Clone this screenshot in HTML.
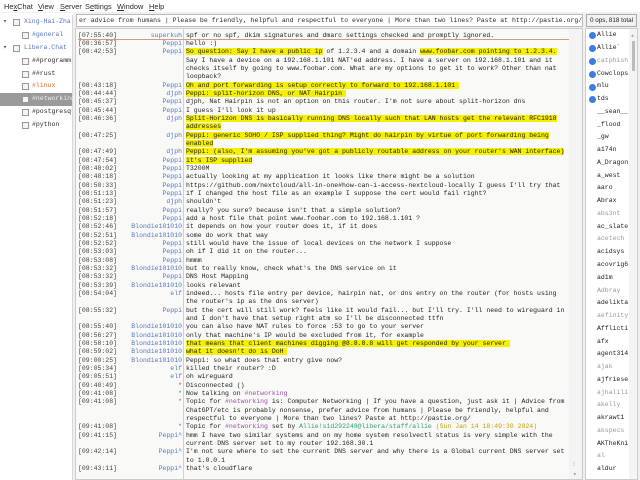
<!DOCTYPE html>
<html><head><meta charset="utf-8"><style>
*{margin:0;padding:0;box-sizing:border-box}
body{width:640px;height:480px;overflow:hidden;background:#f0f0f0;font-family:"Liberation Mono","DejaVu Sans Mono",monospace;position:relative;color:#2a2a2a}
.menu{position:absolute;top:0;left:0;width:640px;height:12px;background:#fff;font-family:"Liberation Sans",sans-serif;font-size:7.4px}
.menu span{position:absolute;top:2px}
.tree{position:absolute;left:0;top:15px;width:73px;height:465px;background:#fff;border-right:1px solid #d8d8d8;font-size:6.5px}
.tb{position:absolute;left:0;top:13px;width:73px;height:3px;background:#fff}
.ti{position:absolute;height:12px;line-height:12px;white-space:pre;overflow:hidden}
.ic{position:absolute;width:7px;height:7px;border:1px solid #999;background:#f4f4f4}
.topic{position:absolute;left:76px;top:14px;width:507px;height:13px;background:#fff;border:1px solid #bbb;font-size:6.5px;line-height:11px;padding-left:2px;white-space:pre;overflow:hidden}
.chat{position:absolute;left:75px;top:28px;width:508px;height:452px;background:#f9f9f8;border:1px solid #ccc;overflow:hidden}
.sep{position:absolute;left:107px;top:0;width:1px;height:452px;background:#d0d0d0}
.mk{position:absolute;left:2px;top:10px;width:491px;height:1px;background:#d49a80}
.sb{position:absolute;left:493px;top:0;width:14px;height:452px;background:#f4f4f4}
.rows{position:absolute;left:0;top:1.5px;width:493px;height:452px}
.row{position:absolute;left:0;height:8.33px;font-size:6.5px;line-height:8.33px;white-space:pre}
.ts{position:absolute;left:2px;color:#444}
.nk{position:absolute;left:20px;width:86px;text-align:right;color:#5577c0}
.tx{position:absolute;left:110px;color:#222}
.hl{background:#f6ef00}
.ch{color:#9c4fa0}
.ul{position:absolute;left:585px;top:28px;width:53px;height:452px;background:#fff;border:1px solid #ccc;overflow:hidden}
.btn{position:absolute;left:586px;top:14px;width:51px;height:13px;border:1px solid #aaa;background:#f2f2f2;font-family:"Liberation Sans",sans-serif;font-size:6.3px;line-height:11px;text-align:center;color:#222}
.u{position:absolute;left:11px;font-size:6.5px;line-height:10px;color:#222;white-space:pre}
.g{color:#999}
.dot{position:absolute;left:3px;width:7px;height:7px;border-radius:50%;background:#3b7de0}
</style></head><body>
<div class="menu"><span style="left:4px">He<u>x</u>Chat</span><span style="left:38px"><u>V</u>iew</span><span style="left:60px"><u>S</u>erver</span><span style="left:85px">S<u>e</u>ttings</span><span style="left:117px"><u>W</u>indow</span><span style="left:149px"><u>H</u>elp</span></div>
<div class="tb"></div>
<div class="tree">
<div class="ti" style="left:3px;top:1px;color:#555">▾</div><div class="ic" style="left:13px;top:4px"></div><div class="ti" style="left:24px;top:1px;color:#5577c0">Xing-Hai-Zha</div>
<div class="ic" style="left:22px;top:17px"></div><div class="ti" style="left:32px;top:14px;color:#5577c0">#general</div>
<div class="ti" style="left:3px;top:27px;color:#555">▾</div><div class="ic" style="left:13px;top:30px"></div><div class="ti" style="left:24px;top:27px;color:#5577c0">Libera.Chat</div>
<div class="ic" style="left:22px;top:43px"></div><div class="ti" style="left:32px;top:40px">##programm</div>
<div class="ic" style="left:22px;top:56px"></div><div class="ti" style="left:32px;top:53px">##rust</div>
<div class="ic" style="left:22px;top:68px"></div><div class="ti" style="left:32px;top:65px;color:#d07020">#linux</div>
<div style="position:absolute;left:0;top:78px;width:72px;height:13px;background:#9a9a9a"></div>
<div class="ic" style="left:22px;top:81px"></div><div class="ti" style="left:32px;top:78px;color:#eee">#networking</div>
<div class="ic" style="left:22px;top:94px"></div><div class="ti" style="left:32px;top:91px">#postgresq</div>
<div class="ic" style="left:22px;top:107px"></div><div class="ti" style="left:32px;top:104px">#python</div>
</div>
<div class="topic">er advice from humans | Please be friendly, helpful and respectful to everyone | More than two lines? Paste at http://pastie.org/</div>
<div class="btn">0 ops, 818 total</div>
<div class="chat">
<div class="sep"></div><div class="mk"></div>
<div class="sb"><div style="position:absolute;left:4px;top:432px;font-size:6px;color:#888">⁝</div><div style="position:absolute;left:4px;top:442px;font-size:6px;color:#888">▾</div></div>
<div class="rows">
<div class="row" style="top:1px"><span class="ts">[07:55:40]</span><span class="nk">superkuh</span><span class="tx">spf or no spf, dkim signatures and dmarc settings checked and promptly ignored.</span></div>
<div class="row" style="top:9.33px"><span class="ts">[08:36:57]</span><span class="nk">Peppi</span><span class="tx">hello :)</span></div>
<div class="row" style="top:17.66px"><span class="ts">[08:42:53]</span><span class="nk">Peppi</span><span class="tx"><span class="hl">So question: Say I have a public ip</span> of 1.2.3.4 and a domain <span class="hl">www.foobar.com pointing to 1.2.3.4.</span></span></div>
<div class="row" style="top:26px"><span class="tx">Say I have a device on a 192.168.1.101 NAT'ed address. I have a server on 192.168.1.101 and it</span></div>
<div class="row" style="top:34.33px"><span class="tx">checks itself by going to www.foobar.com. What are my options to get it to work? Other than nat</span></div>
<div class="row" style="top:42.66px"><span class="tx">loopback?</span></div>
<div class="row" style="top:51px"><span class="ts">[08:43:18]</span><span class="nk">Peppi</span><span class="tx"><span class="hl">Oh and port forwarding is setup correctly to forward to 192.168.1.101 </span></span></div>
<div class="row" style="top:59.33px"><span class="ts">[08:44:44]</span><span class="nk">djph</span><span class="tx"><span class="hl">Peppi: split-horizon DNS, or NAT Hairpin </span></span></div>
<div class="row" style="top:67.66px"><span class="ts">[08:45:37]</span><span class="nk">Peppi</span><span class="tx">djph, Nat Hairpin is not an option on this router. I'm not sure about split-horizon dns</span></div>
<div class="row" style="top:76px"><span class="ts">[08:45:44]</span><span class="nk">Peppi</span><span class="tx">I guess I'll look it up</span></div>
<div class="row" style="top:84.33px"><span class="ts">[08:46:36]</span><span class="nk">djph</span><span class="tx"><span class="hl">Split-Horizon DNS is basically running DNS locally such that LAN hosts get the relevant RFC1918</span></span></div>
<div class="row" style="top:92.66px"><span class="tx"><span class="hl">addresses</span></span></div>
<div class="row" style="top:101px"><span class="ts">[08:47:25]</span><span class="nk">djph</span><span class="tx"><span class="hl">Peppi: generic SOHO / ISP supplied thing? Might do hairpin by virtue of port forwarding being</span></span></div>
<div class="row" style="top:109.33px"><span class="tx"><span class="hl">enabled</span></span></div>
<div class="row" style="top:117.66px"><span class="ts">[08:47:49]</span><span class="nk">djph</span><span class="tx"><span class="hl">Peppi: (also, I'm assuming you've got a publicly routable address on your router's WAN interface)</span></span></div>
<div class="row" style="top:126px"><span class="ts">[08:47:54]</span><span class="nk">Peppi</span><span class="tx"><span class="hl">it's ISP supplied</span></span></div>
<div class="row" style="top:134.33px"><span class="ts">[08:48:02]</span><span class="nk">Peppi</span><span class="tx">T3200M</span></div>
<div class="row" style="top:142.66px"><span class="ts">[08:48:18]</span><span class="nk">Peppi</span><span class="tx">actually looking at my application it looks like there might be a solution</span></div>
<div class="row" style="top:151px"><span class="ts">[08:50:33]</span><span class="nk">Peppi</span><span class="tx">https://github.com/nextcloud/all-in-one#how-can-i-access-nextcloud-locally I guess I'll try that</span></div>
<div class="row" style="top:159.33px"><span class="ts">[08:51:13]</span><span class="nk">Peppi</span><span class="tx">if I changed the host file as an example I suppose the cert would fail right?</span></div>
<div class="row" style="top:167.66px"><span class="ts">[08:51:23]</span><span class="nk">djph</span><span class="tx">shouldn't</span></div>
<div class="row" style="top:176px"><span class="ts">[08:51:57]</span><span class="nk">Peppi</span><span class="tx">really? you sure? because isn't that a simple solution?</span></div>
<div class="row" style="top:184.33px"><span class="ts">[08:52:18]</span><span class="nk">Peppi</span><span class="tx">add a host file that point www.foobar.com to 192.168.1.101 ?</span></div>
<div class="row" style="top:192.66px"><span class="ts">[08:52:46]</span><span class="nk">Blondie101010</span><span class="tx">it depends on how your router does it, if it does</span></div>
<div class="row" style="top:201px"><span class="ts">[08:52:51]</span><span class="nk">Blondie101010</span><span class="tx">some do work that way</span></div>
<div class="row" style="top:209.33px"><span class="ts">[08:52:52]</span><span class="nk">Peppi</span><span class="tx">still would have the issue of local devices on the network I suppose</span></div>
<div class="row" style="top:217.66px"><span class="ts">[08:53:03]</span><span class="nk">Peppi</span><span class="tx">oh if I did it on the router...</span></div>
<div class="row" style="top:226px"><span class="ts">[08:53:08]</span><span class="nk">Peppi</span><span class="tx">hmmm</span></div>
<div class="row" style="top:234.33px"><span class="ts">[08:53:32]</span><span class="nk">Blondie101010</span><span class="tx">but to really know, check what's the DNS service on it</span></div>
<div class="row" style="top:242.66px"><span class="ts">[08:53:32]</span><span class="nk">Peppi</span><span class="tx">DNS Host Mapping</span></div>
<div class="row" style="top:251px"><span class="ts">[08:53:39]</span><span class="nk">Blondie101010</span><span class="tx">looks relevant</span></div>
<div class="row" style="top:259.33px"><span class="ts">[08:54:04]</span><span class="nk">elf</span><span class="tx">indeed... hosts file entry per device, hairpin nat, or dns entry on the router (for hosts using</span></div>
<div class="row" style="top:267.66px"><span class="tx">the router's ip as the dns server)</span></div>
<div class="row" style="top:276px"><span class="ts">[08:55:32]</span><span class="nk">Peppi</span><span class="tx">but the cert will still work? feels like it would fail... but I'll try. I'll need to wireguard in</span></div>
<div class="row" style="top:284.33px"><span class="tx">and I don't have that setup right atm so I'll be disconnected ttfn</span></div>
<div class="row" style="top:292.66px"><span class="ts">[08:55:40]</span><span class="nk">Blondie101010</span><span class="tx">you can also have NAT rules to force :53 to go to your server</span></div>
<div class="row" style="top:301px"><span class="ts">[08:56:27]</span><span class="nk">Blondie101010</span><span class="tx">only that machine's IP would be excluded from it, for example</span></div>
<div class="row" style="top:309.33px"><span class="ts">[08:58:10]</span><span class="nk">Blondie101010</span><span class="tx"><span class="hl">that means that client machines digging @8.8.8.8 will get responded by your server </span></span></div>
<div class="row" style="top:317.66px"><span class="ts">[08:59:02]</span><span class="nk">Blondie101010</span><span class="tx"><span class="hl">what it doesn't do is DoH </span></span></div>
<div class="row" style="top:326px"><span class="ts">[09:00:25]</span><span class="nk">Blondie101010</span><span class="tx">Peppi: so what does that entry give now?</span></div>
<div class="row" style="top:334.33px"><span class="ts">[09:05:34]</span><span class="nk">elf</span><span class="tx">killed their router? :D</span></div>
<div class="row" style="top:342.66px"><span class="ts">[09:05:51]</span><span class="nk">elf</span><span class="tx">oh wireguard</span></div>
<div class="row" style="top:351px"><span class="ts">[09:40:49]</span><span class="nk" style="color:#d03030">*</span><span class="tx">Disconnected ()</span></div>
<div class="row" style="top:359.33px"><span class="ts">[09:41:08]</span><span class="nk" style="color:#30a030">*</span><span class="tx">Now talking on <span class="ch">#networking</span></span></div>
<div class="row" style="top:367.66px"><span class="ts">[09:41:08]</span><span class="nk" style="color:#9c4fa0">*</span><span class="tx">Topic for <span class="ch">#networking</span> is: Computer Networking | If you have a question, just ask it | Advice from</span></div>
<div class="row" style="top:376px"><span class="tx">ChatGPT/etc is probably nonsense, prefer advice from humans | Please be friendly, helpful and</span></div>
<div class="row" style="top:384.33px"><span class="tx">respectful to everyone | More than two lines? Paste at http://pastie.org/</span></div>
<div class="row" style="top:392.66px"><span class="ts">[09:41:08]</span><span class="nk" style="color:#9c4fa0">*</span><span class="tx">Topic for <span class="ch">#networking</span> set by <span style="color:#2fa070">Allie!sid292248@libera/staff/allie</span> <span style="color:#c0a000">(Sun Jan 14 18:49:30 2024)</span></span></div>
<div class="row" style="top:401px"><span class="ts">[09:41:15]</span><span class="nk">Peppi^</span><span class="tx">hmm I have two similar systems and on my home system resolvectl status is very simple with the</span></div>
<div class="row" style="top:409.33px"><span class="tx">current DNS server set to my router 192.168.30.1</span></div>
<div class="row" style="top:417.66px"><span class="ts">[09:42:14]</span><span class="nk">Peppi^</span><span class="tx">I'm not sure where to set the current DNS server and why there is a Global current DNS server set</span></div>
<div class="row" style="top:426px"><span class="tx">to 1.0.0.1</span></div>
<div class="row" style="top:434.33px"><span class="ts">[09:43:11]</span><span class="nk">Peppi^</span><span class="tx">that's cloudflare</span></div>
</div>
</div>
<div class="ul">
<div style="position:absolute;left:43px;top:0;width:9px;height:452px;background:#f4f4f4"></div>
<div style="position:absolute;left:45px;top:4px;font-size:5px;color:#aaa">▲</div>
<div style="position:absolute;left:46px;top:12px;width:3px;height:30px;background:#bbb"></div>
<div class="dot" style="top:3px"></div><div class="u" style="top:1px">Allie</div>
<div class="dot" style="top:16px"></div><div class="u" style="top:14px">Allie`</div>
<div class="dot" style="top:29px"></div><div class="u g" style="top:27px">catphish</div>
<div class="dot" style="top:42px"></div><div class="u" style="top:40px">Cowclops</div>
<div class="dot" style="top:55px"></div><div class="u" style="top:52px">mlu</div>
<div class="dot" style="top:67px"></div><div class="u" style="top:65px">tds</div>
<div class="u" style="top:78px">__sean__</div>
<div class="u" style="top:91px">_flood</div>
<div class="u" style="top:103px">_gw</div>
<div class="u" style="top:116px">a174n</div>
<div class="u" style="top:129px">A_Dragon</div>
<div class="u" style="top:142px">a_west</div>
<div class="u" style="top:154px">aaro</div>
<div class="u" style="top:167px">Abrax</div>
<div class="u g" style="top:180px">abs3nt</div>
<div class="u" style="top:193px">ac_slate</div>
<div class="u g" style="top:205px">acetech</div>
<div class="u" style="top:218px">acidsys</div>
<div class="u" style="top:231px">acovrig6</div>
<div class="u" style="top:244px">ad1m</div>
<div class="u g" style="top:257px">Adbray</div>
<div class="u" style="top:269px">adelikta</div>
<div class="u g" style="top:282px">aefinity</div>
<div class="u" style="top:295px">Afflicti</div>
<div class="u" style="top:308px">afx</div>
<div class="u" style="top:320px">agent314</div>
<div class="u g" style="top:333px">ajak</div>
<div class="u" style="top:346px">ajfriese</div>
<div class="u g" style="top:359px">ajhalili</div>
<div class="u g" style="top:371px">akelly</div>
<div class="u" style="top:384px">akrawt1</div>
<div class="u g" style="top:397px">akspecs</div>
<div class="u" style="top:410px">AKTheKni</div>
<div class="u g" style="top:422px">al</div>
<div class="u" style="top:435px">aldur</div>
</div>
</body></html>
